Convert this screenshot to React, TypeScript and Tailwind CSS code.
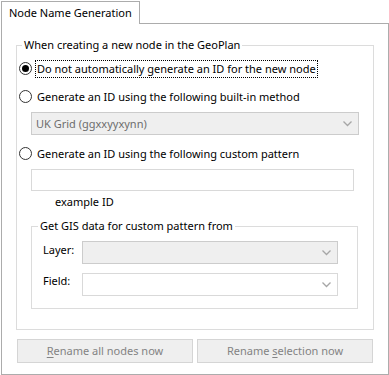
import React from 'react';

function Radio({ checked }: { checked?: boolean }) {
  return (
    <svg width="13" height="13" viewBox="0 0 13 13" className="shrink-0">
      <circle cx="6.5" cy="6.5" r="6" fill="#fff" stroke="#333" strokeWidth="1" />
      {checked && <circle cx="6.5" cy="6.5" r="3.5" fill="#000" />}
    </svg>
  );
}

function Chevron() {
  return (
    <svg width="9" height="6" viewBox="0 0 9 6" className="shrink-0">
      <path d="M0.5 0.5 L4.5 4.5 L8.5 0.5" fill="none" stroke="#a6a6a6" strokeWidth="1.3" />
    </svg>
  );
}

function Combo({ text, disabled, width }: { text?: string; disabled?: boolean; width: string }) {
  return (
    <div
      className={`${width} flex h-[23px] items-center justify-between border pl-[4px] pr-[6px] ${
        disabled ? 'border-[#cccccc] bg-[#efefef] text-[#6d6d6d]' : 'border-[#d9d9d9] bg-white'
      }`}
    >
      <span>{text}</span>
      <Chevron />
    </div>
  );
}

export default function App() {
  return (
    <div
      className="h-[375px] w-[389px] whitespace-nowrap bg-white text-[11px] leading-[16px] text-black"
      style={{ fontFamily: '"Noto Sans", "Open Sans", sans-serif' }}
    >
      <div className="flex pl-[1px] pt-[1px]">
        <div className="relative z-10 -mb-px flex h-[23px] w-[139px] items-center border border-b-0 border-[#acacac] bg-white pl-[7px]">
          Node Name Generation
        </div>
      </div>
      <div className="ml-[1px] h-[352px] w-[388px] border border-[#acacac] bg-white">
        <fieldset className="ml-[14px] mt-[13px] w-[358px] border border-[#dcdcdc] pb-[20px] pl-0">
          <legend className="ml-[5px] px-[2px]">When creating a new node in the GeoPlan</legend>
          <div className="ml-[2px] mt-[7px] flex h-[17px] items-center gap-[3px]">
            <Radio checked />
            <span className="border border-dotted border-black px-[1px]">
              Do not automatically generate an ID for the new node
            </span>
          </div>
          <div className="ml-[2px] mt-[11px] flex h-[17px] items-center gap-[4px]">
            <Radio />
            <span className="px-[1px]">Generate an ID using the following built-in method</span>
          </div>
          <div className="ml-[14px] mt-[7px]">
            <Combo text="UK Grid (ggxxyyxynn)" disabled width="w-[328px]" />
          </div>
          <div className="ml-[2px] mt-[10px] flex h-[17px] items-center gap-[4px]">
            <Radio />
            <span className="px-[1px]">Generate an ID using the following custom pattern</span>
          </div>
          <div className="ml-[14px] mt-[7px] h-[22px] w-[323px] border border-[#d9d9d9] bg-white" />
          <div className="ml-[38px] mt-[3px]">example ID</div>
          <fieldset className="ml-[14px] mt-[8px] w-[327px] border border-[#dcdcdc] pb-[12px]">
            <legend className="ml-[6px] px-[2px]">Get GIS data for custom pattern from</legend>
            <div className="ml-[11px] mt-[7px] flex items-start">
              <span className="w-[39px] pt-[1px]">Layer:</span>
              <Combo disabled width="w-[256px]" />
            </div>
            <div className="ml-[11px] mt-[9px] flex items-start">
              <span className="w-[39px] pt-[0px]">Field:</span>
              <Combo width="w-[256px]" />
            </div>
          </fieldset>
        </fieldset>
        <div className="ml-[15px] mt-[9px] flex gap-[4px]">
          <button className="h-[24px] w-[176px] border border-[#d5d5d5] bg-[#efefef] text-[#838383]">
            <span className="underline underline-offset-2">R</span>ename all nodes now
          </button>
          <button className="h-[24px] w-[176px] border border-[#d5d5d5] bg-[#efefef] text-[#838383]">
            Rename <span className="underline underline-offset-2">s</span>election now
          </button>
        </div>
      </div>
    </div>
  );
}
